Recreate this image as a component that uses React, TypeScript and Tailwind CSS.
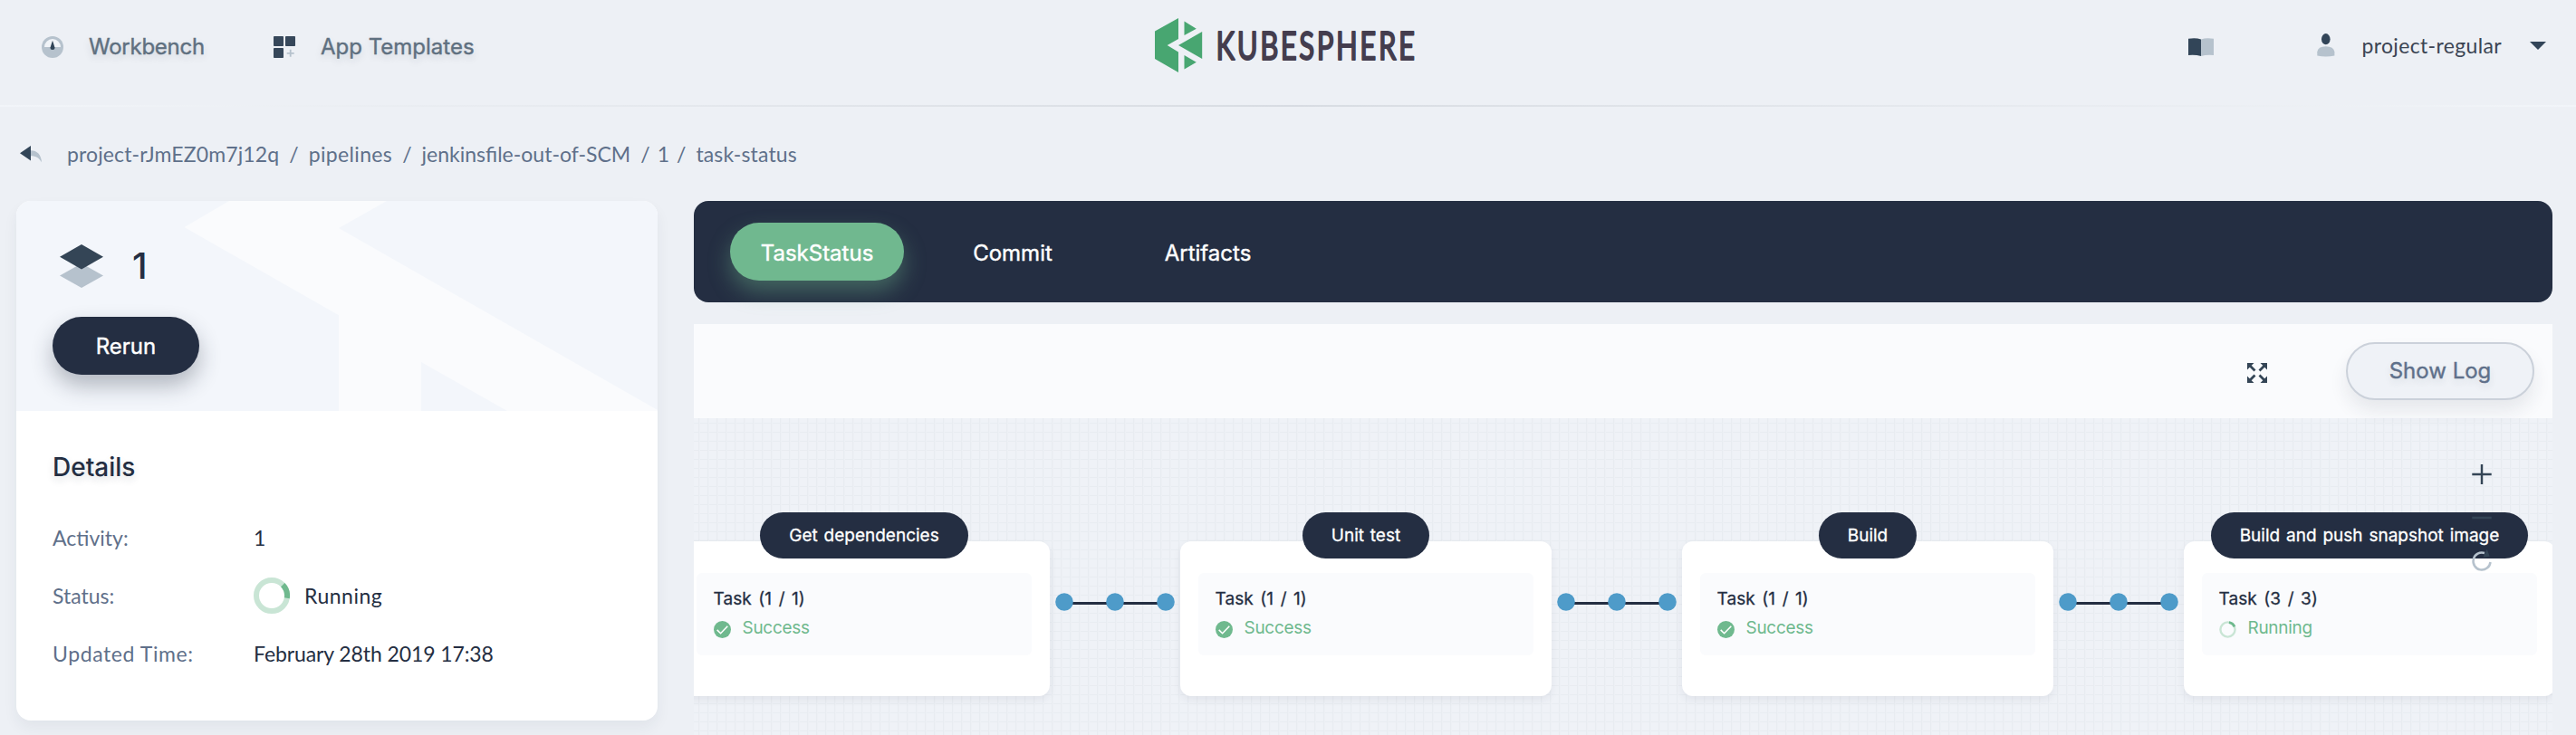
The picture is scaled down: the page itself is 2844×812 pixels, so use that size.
import React from "react";

const GaugeIcon = () => (
  <svg width="24" height="24" viewBox="0 0 24 24" className="shrink-0">
    <circle cx="12" cy="12" r="12" fill="#b6c2cd" />
    <path d="M3 12a9 9 0 0 1 18 0z" fill="#f1f4f8" />
    <path d="M12 4.8l2.5 7.8a2.5 2.5 0 1 1-5 0z" fill="#324558" />
  </svg>
);

const AppsIcon = () => (
  <svg width="24" height="24" viewBox="0 0 24 24" className="shrink-0">
    <rect width="11" height="11" rx="0.8" fill="#36475a" />
    <rect x="13" width="11" height="11" rx="0.8" fill="#36475a" />
    <rect y="13" width="11" height="11" rx="0.8" fill="#36475a" />
    <path d="M18.7 14.8v8M14.7 18.8h8" stroke="#b6c2cd" strokeWidth="1.8" />
  </svg>
);

const BackIcon = () => (
  <svg width="24" height="20" viewBox="0 0 24 20" className="shrink-0">
    <path d="M12 6.2c7 0 11.5 4.6 12 13-2.8-4.6-6-7-12-7z" fill="#b6c2cd" />
    <path d="M0 9.2L12 1v16.500z" fill="#324558" />
  </svg>
);

const LogoMark = () => (
  <svg width="53" height="60" viewBox="0 0 53 60" className="shrink-0">
    <g fill="#48a671">
      <path d="M26 0v23l-12.300 7L26 37.500V60L0 45V14.500z" />
      <path d="M32.500 3.500l13.300 8.200-13.300 7.300z" />
      <path d="M52.200 15v30L26 30z" />
      <path d="M32.500 41l13.300 7.800-13.300 7.700z" />
    </g>
  </svg>
);

const BookIcon = () => (
  <svg width="28" height="20" viewBox="0 0 28 20" className="shrink-0">
    <path d="M0 .8Q8-.8 14 1.500V20Q8 18.300 0 19z" fill="#324558" />
    <path d="M28 .8Q20-.8 14 1.500V20q6-1.700 14-1z" fill="#b6c2cd" />
  </svg>
);

const UserIcon = () => (
  <svg width="20" height="26" viewBox="0 0 20 26" className="shrink-0">
    <ellipse cx="9.800" cy="6.200" rx="4.800" ry="6.100" fill="#324558" />
    <path d="M.3 24.500v-4.300Q1 14.200 9.800 14.200t9.600 6v4.300Q9.800 26.500.3 24.500z" fill="#b6c2cd" />
  </svg>
);

const LayersIcon = () => (
  <svg width="48" height="48" viewBox="0 0 48 48" className="shrink-0">
    <path d="M24 21l24 13.500L24 48 0 34.500z" fill="#b6c2cd" />
    <path d="M24 0l24 13.700L24 27.500 0 13.700z" fill="#344556" />
  </svg>
);

const Spinner = ({ size, from }: { size: number; from: "side" | "top" }) => (
  <svg width={size} height={size} viewBox="0 0 40 40" className="shrink-0">
    <circle cx="20" cy="20" r="17" fill="none" stroke="#c9e5d5" strokeWidth={from === "side" ? 6 : 5} />
    {from === "side" ? (
      <path d="M32.200 8.200A17 17 0 0 1 36.800 22.800" fill="none" stroke="#6fb98e" strokeWidth="6" />
    ) : (
      <path d="M23 3.300A17 17 0 0 1 35.800 13.500" fill="none" stroke="#6fb98e" strokeWidth="6" />
    )}
  </svg>
);

const CheckIcon = () => (
  <svg width="19" height="19" viewBox="0 0 19 19" className="shrink-0">
    <circle cx="9.500" cy="9.500" r="9.500" fill="#6fb98e" />
    <path d="M3.700 9.900l3.900 3.800 7.700-8" fill="none" stroke="#fff" strokeWidth="1.600" />
  </svg>
);

const ExpandIcon = () => (
  <svg width="22" height="22" viewBox="0 0 22 22" className="shrink-0">
    <g fill="#344556" stroke="#344556">
      <path stroke="none" d="M0 0h7.500L0 7.500zM22 0h-7.500L22 7.500zM0 22h7.500L0 14.500zM22 22h-7.500l7.500-7.500z" />
      <path strokeWidth="2.800" d="M2.500 2.500l6 6M19.500 2.500l-6 6M2.500 19.500l6-6M19.500 19.500l-6-6" />
    </g>
  </svg>
);

const crumbs = [
  { label: "project-rJmEZ0m7j12q", style: "tracking-[0.12px]" },
  { label: "pipelines", style: "tracking-[0.35px]" },
  { label: "jenkinsfile-out-of-SCM", style: "" },
  { label: "1", style: "-mx-[3px]" },
  { label: "task-status", style: "tracking-[0.15px]" },
];

type Stage = { name: string; task: string; running?: boolean };

const stages: Stage[] = [
  { name: "Get dependencies", task: "Task (1 / 1)" },
  { name: "Unit test", task: "Task (1 / 1)" },
  { name: "Build", task: "Task (1 / 1)" },
  { name: "Build and push snapshot image", task: "Task (3 / 3)", running: true },
];

const StageCard = ({ stage }: { stage: Stage }) => (
  <div className="h-[171px] w-[410px] shrink-0 rounded-xl bg-white px-5 shadow-[0_4px_10px_rgba(36,46,66,0.07)]">
    <div className="-mt-8 flex justify-center">
      <div className="flex h-[51px] items-center whitespace-nowrap rounded-full bg-[#242e42] px-8 pt-0.5 text-[19px] text-white [-webkit-text-stroke:0.3px] [word-spacing:1.500px]">
        {stage.name}
      </div>
    </div>
    <div className="mt-4 h-[91px] rounded-md bg-[#fafbfd] pl-[18.500px] pt-[17px]">
      <div className="text-[19px] leading-6 tracking-[0.1px] text-[#242e42] [-webkit-text-stroke:0.3px] [word-spacing:2px]">
        {stage.task}
      </div>
      <div className="mt-[8px] flex items-center gap-[13px] text-[19px] leading-6 tracking-[-0.3px] text-[#6fb98e]">
        <span className="mt-[3px]">{stage.running ? <Spinner size={19} from="top" /> : <CheckIcon />}</span>
        {stage.running ? "Running" : "Success"}
      </div>
    </div>
  </div>
);

const Connector = () => (
  <svg width="144" height="90" viewBox="0 0 144 90" className="shrink-0">
    <path d="M16 68.500h112" stroke="#242e42" strokeWidth="3" />
    <g fill="#4e9bc9">
      <circle cx="16" cy="67" r="9.800" />
      <circle cx="72" cy="67" r="9.800" />
      <circle cx="128" cy="67" r="9.800" />
    </g>
  </svg>
);

const Detail = ({ label, children }: { label: React.ReactNode; children: React.ReactNode }) => (
  <div className="flex h-16 items-center font-['Lato',sans-serif] text-[23px]">
    <div className="w-[222px] text-[#5f708a]">{label}</div>
    <div className="flex items-center gap-4 text-[#242e42]">{children}</div>
  </div>
);

export default function App() {
  return (
    <div className="flex h-[812px] w-full flex-col overflow-hidden bg-[#edf0f5] font-['Inter',sans-serif]">
      <header className="grid h-[116px] shrink-0 grid-cols-[1275px_300px_1fr]">
        <nav className="flex h-[104px] items-center pl-[46px] text-2xl text-[#5f7080] [-webkit-text-stroke:0.4px] [text-shadow:0_4px_8px_rgba(36,46,66,0.15)]">
          <a className="flex w-64 items-center gap-7 tracking-[-0.25px]">
            <GaugeIcon />
            Workbench
          </a>
          <a className="flex items-center gap-7">
            <AppsIcon />
            App Templates
          </a>
        </nav>
        <div className="flex h-[100px] items-center">
          <LogoMark />
          <svg width="240" height="60" viewBox="0 0 240 60" className="overflow-visible">
            <text
              x="14.500"
              y="45.500"
              textLength="222"
              lengthAdjust="spacingAndGlyphs"
              className="fill-[#443d4e] stroke-[#443d4e] font-['Lato',sans-serif] text-[43px] tracking-[3.500px] [stroke-linejoin:round] [stroke-width:2px]"
            >
              KUBESPHERE
            </text>
          </svg>
        </div>
        <div className="flex h-[100px] items-center justify-end pr-[33px]">
          <span className="mr-[114px] mt-1">
            <BookIcon />
          </span>
          <UserIcon />
          <span className="ml-[29px] mr-[31px] font-['Lato',sans-serif] text-[23px] tracking-[0.35px] text-[#3b4453]">
            project-regular
          </span>
          <svg width="18" height="9" viewBox="0 0 18 9">
            <path d="M0 0h18L9 9z" fill="#324558" />
          </svg>
        </div>
      </header>
      <div className="h-0.5 shrink-0 bg-linear-to-r from-[#f2f5f9] via-[#d8dce2] to-[#f2f5f9]" />

      <div className="flex h-[104px] shrink-0 items-center pl-[22px] font-['Lato',sans-serif] text-[23px] text-[#5f708a]">
        <BackIcon />
        <div className="ml-7 flex">
          {crumbs.map((c, i) => (
            <span key={c.label} className="flex">
              {i > 0 && <span className="mx-[11px]">/</span>}
              <span className={c.style}>{c.label}</span>
            </span>
          ))}
        </div>
      </div>

      <main className="flex gap-10 pl-[18px] pr-[26px]">
        <section className="h-[574px] w-[708px] shrink-0 rounded-2xl bg-white shadow-[0_8px_16px_rgba(36,46,66,0.06)]">
          <div className="relative h-[232px] overflow-hidden rounded-t-2xl bg-[#f3f6fb] px-10 pt-12">
            <svg width="708" height="232" viewBox="0 0 708 232" className="absolute left-0 top-0">
              <path
                d="M185.500 29L235 0h174l-53 30 352 201v1H542L447 178v54h-91V126.300z"
                fill="#fafbfd"
              />
            </svg>
            <div className="relative flex h-12 items-center gap-8 pl-2">
              <LayersIcon />
              <span className="text-[40px] font-medium text-[#242e42]">1</span>
            </div>
            <button className="relative mt-8 h-16 w-[162px] rounded-full bg-[#242e42] pt-0.5 text-2xl text-white shadow-[0_12px_24px_rgba(36,46,66,0.32)] [-webkit-text-stroke:0.4px]">
              Rerun
            </button>
          </div>
          <div className="px-10 pt-[46px]">
            <h2 className="mb-[30px] text-[28px] font-medium leading-8 text-[#242e42] [text-shadow:0_4px_8px_rgba(36,46,66,0.15)]">
              Details
            </h2>
            <Detail label="Activity:">1</Detail>
            <Detail label="Status:">
              <Spinner size={40} from="side" />
              <span className="tracking-[0.5px]">Running</span>
            </Detail>
            <Detail label={<span className="tracking-[0.6px]">Updated Time:</span>}>
              <span className="tracking-[-0.1px]">February 28th 2019 17:38</span>
            </Detail>
          </div>
        </section>

        <section className="min-w-0 flex-1">
          <div className="flex h-28 items-center gap-10 rounded-2xl bg-[#242e42] px-10 text-2xl text-white [-webkit-text-stroke:0.4px]">
            <div className="flex h-16 w-48 items-center justify-center rounded-full bg-[#70b88f] pt-1 shadow-[0_12px_24px_rgba(112,184,143,0.4)]">
              TaskStatus
            </div>
            <div className="flex w-40 justify-center pt-1">Commit</div>
            <div className="flex w-[191px] justify-center pt-1">Artifacts</div>
          </div>

          <div className="relative z-10 mt-6 flex h-[104px] items-center justify-end bg-[#fafbfd] pr-5">
            <span className="mr-[87px] mt-1">
              <ExpandIcon />
            </span>
            <button className="h-16 w-52 rounded-full border-2 border-[#cbd1da] bg-[#eff2f7] text-2xl text-[#5f708a] shadow-[0_12px_20px_rgba(36,46,66,0.09)] [-webkit-text-stroke:0.4px] [text-shadow:0_4px_8px_rgba(36,46,66,0.12)]">
              Show Log
            </button>
          </div>

          <div className="relative h-[350px] overflow-hidden bg-[#eff2f7] bg-[linear-gradient(90deg,transparent_5px,#e8ecf1_5px,#e8ecf1_6px,#edf0f5_6px,#edf0f5_7px,transparent_7px),linear-gradient(180deg,transparent_5px,#e8ecf1_5px,#e8ecf1_6px,transparent_6px)] bg-size-[10px_10px]">
            <div className="-ml-[17px] flex pt-[136px]">
              {stages.map((s, i) => (
                <div key={s.name} className="flex shrink-0">
                  {i > 0 && <Connector />}
                  <StageCard stage={s} />
                </div>
              ))}
            </div>
            <div className="absolute right-[66px] top-[50px] flex flex-col gap-6">
              <svg width="24" height="24" viewBox="0 0 24 24">
                <path d="M12 1v22M1.300 12h21.400" stroke="#344556" strokeWidth="2.400" />
              </svg>
              <svg width="24" height="24" viewBox="0 0 24 24">
                <path d="M1.300 12h21.400" stroke="#344556" strokeWidth="2.600" />
              </svg>
              <svg width="24" height="24" viewBox="0 0 24 24" className="overflow-visible">
                <path d="M15 3A9.500 9.500 0 1 0 21.500 13" fill="none" stroke="#b6c2cd" strokeWidth="2.500" />
                <path d="M17.700-1.300l3 8-7.200.8z" fill="#344556" />
              </svg>
            </div>
          </div>
        </section>
      </main>
    </div>
  );
}
